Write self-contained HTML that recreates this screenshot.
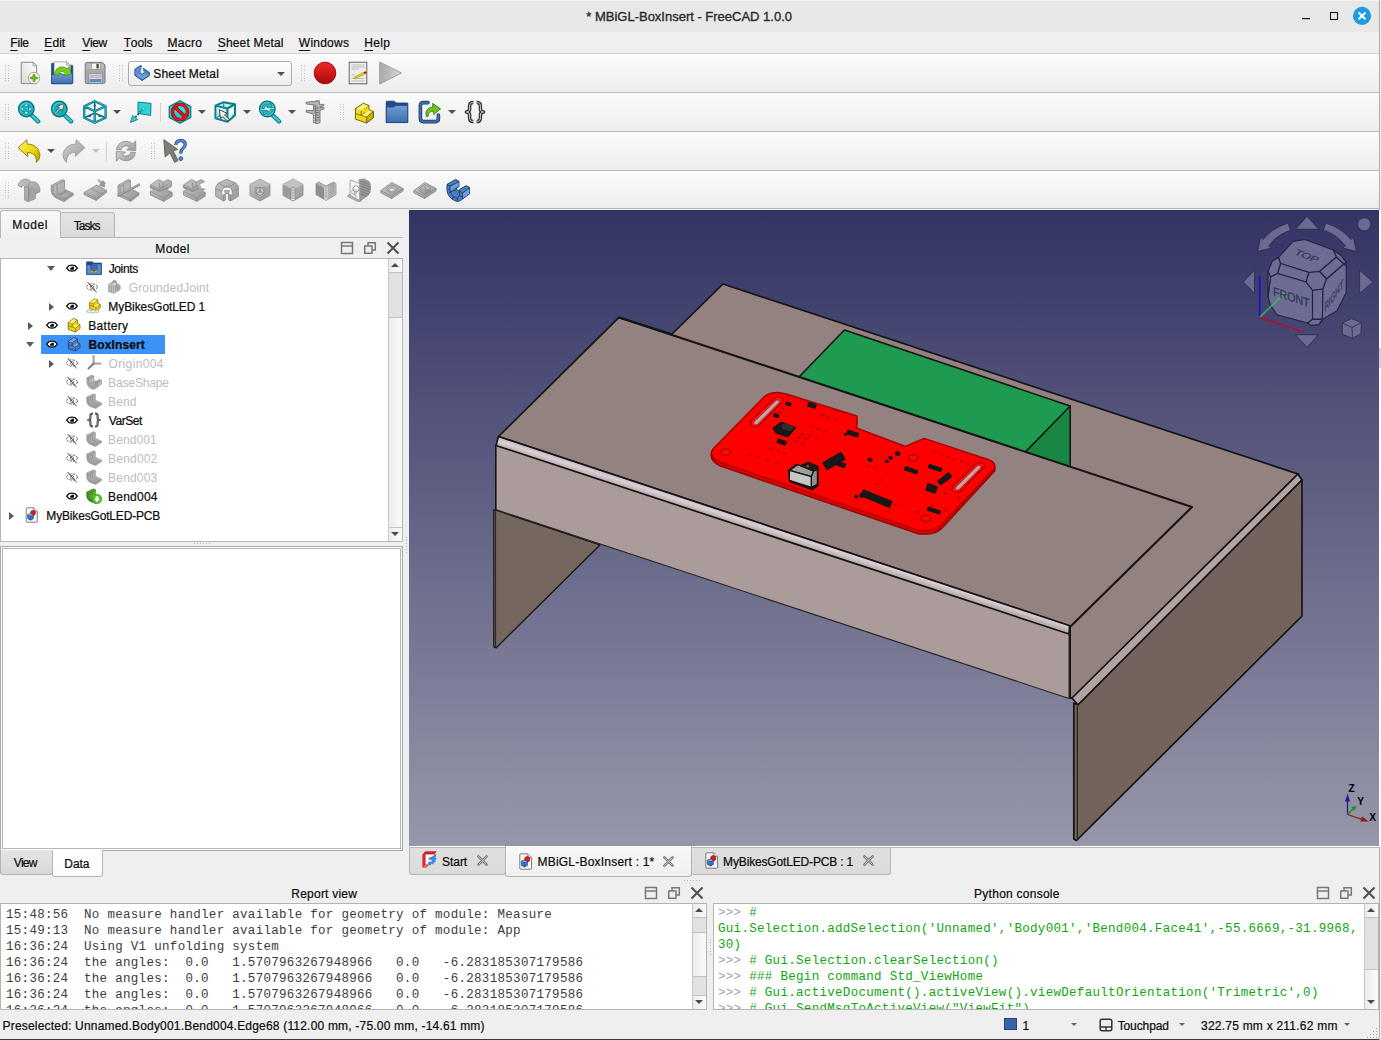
<!DOCTYPE html>
<html lang="en">
<head>
<meta charset="utf-8">
<title>* MBiGL-BoxInsert - FreeCAD 1.0.0</title>
<style>
*{box-sizing:border-box;margin:0;padding:0}
html,body{width:1381px;height:1040px;overflow:hidden;background:#efefef}
body{position:relative;font-family:"Liberation Sans","DejaVu Sans",sans-serif;font-size:12px;color:#1a1a1a;-webkit-font-smoothing:antialiased}
.abs{position:absolute}
.t{position:absolute;white-space:pre;line-height:16px;height:16px;z-index:3;color:#0a0a0a;-webkit-text-stroke:0.2px currentColor}
#titlebar{left:0;top:0;width:1381px;height:32px;background:#e8e8e8}
#title{left:0;width:1378px;top:8px;text-align:center;font-weight:bold;font-size:12.4px;color:#2b2b2b}
#menubar{left:0;top:32px;width:1381px;height:22px;background:#efefef;border-bottom:1px solid #d2d2d2}
#menubar .t{top:3px}
u{text-decoration:underline;text-underline-offset:2.6px;text-decoration-thickness:1px}
.tb{left:0;width:1381px;height:39px;background:linear-gradient(#fbfbfb,#ededed);border-bottom:1px solid #b9b9b9}
.grip{position:absolute;top:11px}
.sep{position:absolute;width:1px;height:19px;top:10px;background:#d2d2d2}
.ic{position:absolute;width:24px;height:24px;top:7px}
.dd{position:absolute;width:0;height:0;border-left:4px solid transparent;border-right:4px solid transparent;border-top:4.5px solid #505050;top:17px}
.dd.dis{border-top-color:#c4c4c4}
</style>
</head>
<body>
<style>
.tab{position:absolute;border:1px solid #b6b6b6;text-align:center;line-height:16px}
.tab.sel{background:linear-gradient(#f8f8f8,#efefef);z-index:2}
.tab.un{background:linear-gradient(#e4e4e4,#d9d9d9)}
.docktitle{position:absolute;height:20px;line-height:16px;text-align:center}
.frame{position:absolute;background:#fff;border:1px solid #b4b4b4}
.row{position:absolute;left:0;height:19px;width:386px}
.row .t{top:2px}
.row .dis{color:#b9b9b9}
.tarrow{position:absolute;top:6px;width:0;height:0}
.tarrow.r{border-top:4px solid transparent;border-bottom:4px solid transparent;border-left:5px solid #5a5a5a;top:5.5px}
.tarrow.d{border-left:4px solid transparent;border-right:4px solid transparent;border-top:5px solid #5a5a5a;top:7px}
.ti{position:absolute;top:1px;width:16px;height:16px}
.sb{position:absolute;width:14px;background:linear-gradient(90deg,#ececec,#fbfbfb);border-left:1px solid #c6c6c6}
.sb .h{position:absolute;left:0;width:13px;background:#e2e2e2;border-top:1px solid #c0c0c0;border-bottom:1px solid #c0c0c0}
.sb .u,.sb .d{position:absolute;left:2px;width:0;height:0;border-left:4px solid transparent;border-right:4px solid transparent}
.sb .u{border-bottom:4px solid #4a4a4a}
.sb .d{border-top:4px solid #4a4a4a}
.dbtn{position:absolute;width:14px;height:14px}
</style>
<svg width="0" height="0" style="position:absolute">
  <defs>
    <symbol id="eye" viewBox="0 0 16 16"><path d="M2.6 8.1 L5.2 5.5 Q8 4.7 10.8 5.5 L13.4 8.1 L10.8 10.7 Q8 11.5 5.2 10.7Z" fill="#fff" stroke="#050505" stroke-width="1.3" stroke-linejoin="round"/><path d="M6.2 9.7 V7.7 H7.4 V6.8 H9.9 V9.7Z" fill="#050505"/></symbol>
    <symbol id="eyeoff" viewBox="0 0 16 16"><ellipse cx="8" cy="8" rx="5.4" ry="3.1" fill="none" stroke="#666" stroke-width="1" stroke-dasharray="2.4 1"/><circle cx="8" cy="8.2" r="1.7" fill="none" stroke="#777" stroke-width="0.9"/><path d="M3.6 3 L12.6 13.4" stroke="#4a4a4a" stroke-width="1"/></symbol>
    <symbol id="dk1" viewBox="0 0 14 14"><rect x="1.5" y="1.5" width="11" height="11" fill="none" stroke="#777" stroke-width="1.5"/><path d="M1.5 5 H12.5" stroke="#777" stroke-width="1.5"/></symbol>
    <symbol id="dk2" viewBox="0 0 14 14"><path d="M5 5 V1.7 H12.3 V9 H9" fill="none" stroke="#777" stroke-width="1.5"/><rect x="1.7" y="5" width="7.3" height="7.3" fill="none" stroke="#777" stroke-width="1.5"/></symbol>
    <symbol id="dk3" viewBox="0 0 14 14"><path d="M1.5 1.5 L12.5 12.5 M12.5 1.5 L1.5 12.5" stroke="#4e4e4e" stroke-width="2"/></symbol>
  </defs>
</svg>
<style>
.mono{font-family:"Liberation Mono","DejaVu Sans Mono",monospace;font-size:12.5px;letter-spacing:0.3px;line-height:16px;white-space:pre;position:absolute;left:5px}
.mtab{position:absolute;border:1px solid #b4b4b4;border-top:none;border-radius:0 0 3px 3px}
.mtab .t{top:5px}
.mtab.sel{background:linear-gradient(#f8f8f8,#f0f0f0)}
.mtab.un{background:linear-gradient(#dfdfdf,#dbdbdb)}
.pg{color:#a0a0a0}
.gr{color:#10a610}
</style>
<svg width="0" height="0" style="position:absolute"><defs>
  <symbol id="xcl" viewBox="0 0 11 11"><path d="M1.4 1.4 L9.6 9.6 M9.6 1.4 L1.4 9.6" stroke="#737373" stroke-width="2.5" stroke-linecap="round"/><path d="M1.6 1.6 L9.4 9.4 M9.4 1.6 L1.6 9.4" stroke="#d4d6d0" stroke-width="0.9" stroke-linecap="round"/></symbol>
  <symbol id="i_doc" viewBox="0 0 16 16"><path d="M3.5 1.5 H10 L12.5 4 V14.5 H3.5Z" fill="#fafafa" stroke="#555" stroke-width="1"/><path d="M10 1.5 V4 H12.5" fill="#ddd" stroke="#555" stroke-width="0.8"/><path d="M5 8.5 L8 7.5 L10 8.5 V12 L7.5 13.5 L5 12Z" fill="#2f62b5" stroke="#1b3c78" stroke-width="0.6"/><circle cx="9.6" cy="7" r="2.1" fill="#e02020"/></symbol>
  <symbol id="fclogo" viewBox="0 0 15 17"><path d="M0.6 3.4 L3.4 0.6 H14.6 L11.8 3.4 V3.4 H14.6 L11.6 6.6 H7.4 V8 H10.6 L8 11 H7.4 L7.4 13.6 L4.4 16.4 H0.6Z" fill="#e8343a"/><path d="M0.6 3.4 L3.4 0.6 H14.6 L11.8 3.4Z" fill="#c8242a"/><path d="M0.6 3.4 H3.6 V13.6 L0.6 16.4Z" fill="#d42a30"/><path d="M3.6 3.4 H11.8 V6.4 H6.6 V8.6 H9.6 V10.8 H6.6 V13.6 H3.6Z" fill="#fff"/><path d="M0.6 16.4 L3.6 13.6 H6.6 L4.4 16.4Z" fill="#ff5a5e"/><path d="M8 6.6 L14.2 3.6 L13.4 6.6 L14.8 8 L13 9 L14 11 L11.8 11.2 L11.6 13.4 L9.6 12.8 L8.4 14.6 L6.6 13.6 L4.6 16.4 L6.6 10.8 H9.6 V8.6 H6.8Z" fill="#3a8be4"/></symbol>
  <symbol id="i_doc2" viewBox="0 0 14 17"><path d="M1.8 0.8 H8.8 L12.6 4.4 V15.2 Q12.6 16.2 11.6 16.2 H1.8 Q0.8 16.2 0.8 15.2 V1.8 Q0.8 0.8 1.8 0.8Z" fill="#f6f6f4" stroke="#6a6e70" stroke-width="0.9"/><path d="M8.8 0.8 V4.4 H12.6" fill="#e4e4e2" stroke="#6a6e70" stroke-width="0.7"/><circle cx="8.2" cy="6.2" r="2.7" fill="#e0161c" stroke="#a40a10" stroke-width="0.5"/><path d="M2.4 8.2 L5.4 7 L8.4 8.2 V12.4 L5.6 14 L2.4 12.4Z" fill="#3e7cc6" stroke="#1c3f78" stroke-width="0.7" stroke-linejoin="round"/><path d="M2.4 8.2 L5.6 9.6 L8.4 8.2 M5.6 9.6 V14" fill="none" stroke="#1c3f78" stroke-width="0.6"/><path d="M2.8 8.3 L5.5 7.3 L8 8.3 L5.6 9.3Z" fill="#7fb0ea"/></symbol>
</defs></svg>
<svg width="0" height="0" style="position:absolute"><defs><symbol id="gripdots" viewBox="0 0 6 20"><g fill="#c2c2c2"><rect x="0" y="0" width="1" height="1"/><rect x="3" y="0" width="1" height="1"/><rect x="0" y="3" width="1" height="1"/><rect x="3" y="3" width="1" height="1"/><rect x="0" y="5" width="1" height="1"/><rect x="3" y="5" width="1" height="1"/><rect x="0" y="8" width="1" height="1"/><rect x="3" y="8" width="1" height="1"/><rect x="0" y="10" width="1" height="1"/><rect x="3" y="10" width="1" height="1"/><rect x="0" y="13" width="1" height="1"/><rect x="3" y="13" width="1" height="1"/><rect x="0" y="15" width="1" height="1"/><rect x="3" y="15" width="1" height="1"/></g></symbol></defs></svg>
<div id="titlebar" class="abs">
  <div class="abs" style="left:0;top:0;width:1379px;height:1px;background:#f1f1f1"></div>
  <svg class="abs" style="left:1296px;top:0" width="83" height="32" viewBox="1296 0 83 32">
    <rect x="1302" y="18" width="8" height="1.2" fill="#1a1a1a"/>
    <rect x="1330.5" y="12.5" width="7" height="7" fill="none" stroke="#1a1a1a" stroke-width="1.1"/>
    <circle cx="1362" cy="15.9" r="9.1" fill="#1d9ce0"/>
    <path d="M1358.6 12.5 L1365.4 19.3 M1365.4 12.5 L1358.6 19.3" stroke="#fff" stroke-width="2" stroke-linecap="butt"/>
  </svg>
</div>
<div id="menubar" class="abs"></div>
<span class="t" style="left:586.29px;top:8.50px;letter-spacing:-0.006px;font-size:13px;color:#2b2b2b;-webkit-text-stroke:0.35px #2b2b2b">* MBiGL-BoxInsert - FreeCAD 1.0.0</span>
<span class="t" style="left:10.32px;top:34.74px;letter-spacing:-0.206px"><u style="letter-spacing:0;margin-right:-0.206px">F</u>ile</span>
<span class="t" style="left:44.32px;top:34.74px;letter-spacing:0.065px"><u style="letter-spacing:0;margin-right:0.065px">E</u>dit</span>
<span class="t" style="left:82.25px;top:34.74px;letter-spacing:-0.395px"><u style="letter-spacing:0;margin-right:-0.395px">V</u>iew</span>
<span class="t" style="left:123.63px;top:34.74px;letter-spacing:-0.11px"><u style="letter-spacing:0;margin-right:-0.11px">T</u>ools</span>
<span class="t" style="left:167.52px;top:34.74px;letter-spacing:0.287px"><u style="letter-spacing:0;margin-right:0.287px">M</u>acro</span>
<span class="t" style="left:217.76px;top:34.74px;letter-spacing:0.171px"><u style="letter-spacing:0;margin-right:0.171px">S</u>heet Metal</span>
<span class="t" style="left:298.85px;top:34.74px;letter-spacing:0.234px"><u style="letter-spacing:0;margin-right:0.234px">W</u>indows</span>
<span class="t" style="left:364.32px;top:34.74px;letter-spacing:0.336px"><u style="letter-spacing:0;margin-right:0.336px">H</u>elp</span>
<div class="abs tb" style="top:54px;height:39px" id="tb1"><svg class="grip" style="left:5px" width="6" height="20" viewBox="0 0 6 20"><use href="#gripdots"/></svg><svg class="ic" style="left:18px"><use href="#ic_new"/></svg><svg class="ic" style="left:51px"><use href="#ic_open"/></svg><svg class="ic" style="left:84px"><use href="#ic_save"/></svg><svg class="grip" style="left:119px" width="6" height="20" viewBox="0 0 6 20"><use href="#gripdots"/></svg><div class="abs" id="combo" style="left:128px;top:7px;width:164px;height:25px;border:1px solid #adadad;border-radius:3px;background:linear-gradient(#ffffff,#ececec)"><svg class="abs" style="left:5px;top:3px" width="16" height="16"><use href="#ic_sm"/></svg><i class="dd" style="left:148px;top:10px"></i></div><svg class="grip" style="left:301px" width="6" height="20" viewBox="0 0 6 20"><use href="#gripdots"/></svg><svg class="ic" style="left:313px"><use href="#ic_rec"/></svg><svg class="ic" style="left:346px"><use href="#ic_macro"/></svg><svg class="ic" style="left:379px"><use href="#ic_play"/></svg></div>
<div class="abs tb" style="top:93px;height:39px" id="tb2"><svg class="grip" style="left:5px" width="6" height="20" viewBox="0 0 6 20"><use href="#gripdots"/></svg><svg class="ic" style="left:17px"><use href="#ic_zfit"/></svg><svg class="ic" style="left:50px"><use href="#ic_zsel"/></svg><svg class="ic" style="left:83px"><use href="#ic_views"/></svg><i class="dd" style="left:113px"></i><svg class="ic" style="left:129px"><use href="#ic_plarrow"/></svg><i class="sep" style="left:160px"></i><svg class="ic" style="left:168px"><use href="#ic_draw"/></svg><i class="dd" style="left:198px"></i><svg class="ic" style="left:213px"><use href="#ic_bbox"/></svg><i class="dd" style="left:243px"></i><svg class="ic" style="left:258px"><use href="#ic_zsync"/></svg><i class="dd" style="left:288px"></i><svg class="ic" style="left:303px"><use href="#ic_calip"/></svg><svg class="grip" style="left:340px" width="6" height="20" viewBox="0 0 6 20"><use href="#gripdots"/></svg><svg class="ic" style="left:352px"><use href="#ic_part"/></svg><svg class="ic" style="left:385px"><use href="#ic_group"/></svg><svg class="ic" style="left:418px"><use href="#ic_linkact"/></svg><i class="dd" style="left:448px"></i><svg class="ic" style="left:463px"><use href="#ic_varset"/></svg></div>
<div class="abs tb" style="top:132px;height:39px" id="tb3"><svg class="grip" style="left:5px" width="6" height="20" viewBox="0 0 6 20"><use href="#gripdots"/></svg><svg class="ic" style="left:17px"><use href="#ic_undo"/></svg><i class="dd" style="left:47px"></i><svg class="ic" style="left:62px"><use href="#ic_redo"/></svg><i class="dd dis" style="left:92px"></i><i class="sep" style="left:106px"></i><svg class="ic" style="left:114px"><use href="#ic_refresh"/></svg><svg class="grip" style="left:151px" width="6" height="20" viewBox="0 0 6 20"><use href="#gripdots"/></svg><svg class="ic" style="left:163px"><use href="#ic_whats"/></svg></div>
<div class="abs tb" style="top:171px;height:38px" id="tb4"><svg class="grip" style="left:5px" width="6" height="20" viewBox="0 0 6 20"><use href="#gripdots"/></svg><svg class="ic" style="left:17px"><use href="#sm_wall"/></svg><svg class="ic" style="left:50px"><use href="#sm_extend"/></svg><svg class="ic" style="left:83px"><use href="#sm_flange"/></svg><svg class="ic" style="left:116px"><use href="#sm_fold"/></svg><svg class="ic" style="left:149px"><use href="#sm_unfold"/></svg><svg class="ic" style="left:182px"><use href="#sm_unfold2"/></svg><svg class="ic" style="left:215px"><use href="#sm_relief"/></svg><svg class="ic" style="left:248px"><use href="#sm_junction"/></svg><svg class="ic" style="left:281px"><use href="#sm_bend"/></svg><svg class="ic" style="left:314px"><use href="#sm_sketch"/></svg><svg class="ic" style="left:347px"><use href="#sm_form"/></svg><svg class="ic" style="left:380px"><use href="#sm_base"/></svg><svg class="ic" style="left:413px"><use href="#sm_flat"/></svg><svg class="ic" style="left:446px"><use href="#sm_conv"/></svg></div>
<span class="t" style="left:153.26px;top:65.74px;letter-spacing:0.151px">Sheet Metal</span>
<div id="left" class="abs" style="left:0;top:209px;width:409px;height:670px;background:#efefef">
  <div class="abs" style="left:0;top:28px;width:403px;height:1px;background:#b6b6b6"></div>
  <div class="tab sel" style="left:0;top:1px;width:61px;height:28px;border-bottom:none;border-radius:3px 3px 0 0"></div>
  <div class="tab un" style="left:60px;top:3px;width:55px;height:26px;border-radius:3px 3px 0 0"></div>
  <svg class="dbtn" style="left:340px;top:32px"><use href="#dk1"/></svg>
  <svg class="dbtn" style="left:363px;top:32px"><use href="#dk2"/></svg>
  <svg class="dbtn" style="left:386px;top:32px"><use href="#dk3"/></svg>
  <div class="frame" id="tree" style="left:0;top:49px;width:403px;height:284px">
    <div class="sb" style="left:387px;top:0;height:282px"><i class="u" style="top:4px"></i><i class="h" style="top:13px;height:46px"></i><i class="d" style="top:273px"></i><i class="abs" style="left:0;top:268px;width:13px;height:1px;background:#c6c6c6"></i></div>
  </div>
  <div class="abs" style="left:194px;top:334px;width:17px;height:1px;background-image:linear-gradient(90deg,#b4b4b4 1px,transparent 1px);background-size:3px 1px"></div>
  <div class="abs" style="left:0;top:337px;width:403px;height:305px;border:1px solid #a9a9a9;background:#fff"></div>
  <div class="frame" style="left:2px;top:339px;width:399px;height:301px;border-color:#b6b6b6"></div>
  <div class="tab un" style="left:0;top:641px;width:53px;height:25px;border-top:none;border-radius:0 0 3px 3px"></div>
  <div class="tab sel" style="left:52px;top:641px;width:51px;height:27px;border-top:none;border-radius:0 0 3px 3px;background:linear-gradient(#fff,#fcfcfc)"></div>
  <div class="abs" style="left:406px;top:328px;width:1px;height:17px;background-image:linear-gradient(#a8a8a8 1px,transparent 1px);background-size:1px 3px"></div>
</div>
<span class="t" style="left:12.32px;top:216.84px;letter-spacing:0.576px">Model</span>
<span class="t" style="left:73.63px;top:217.84px;letter-spacing:-0.925px">Tasks</span>
<span class="t" style="left:155.32px;top:240.84px;letter-spacing:0.376px">Model</span>
<span class="t" style="left:13.85px;top:854.84px;letter-spacing:-0.729px">View</span>
<span class="t" style="left:64.32px;top:855.84px;letter-spacing:-0.054px">Data</span>
<div class="abs" id="rows" style="left:0;top:0;width:388px;height:540px;overflow:hidden">
<i class="tarrow d" style="left:47px;top:266px"></i>
<svg class="ti" style="left:64px;top:260px"><use href="#eye"/></svg>
<svg class="ti" style="left:86px;top:259.5px"><use href="#i_folder"/></svg>
<span class="t" style="left:108.71px;top:260.84px;letter-spacing:-0.385px">Joints</span>
<svg class="ti" style="left:84px;top:279px"><use href="#eyeoff"/></svg>
<svg class="ti" style="left:106px;top:278.5px"><use href="#i_gjoint"/></svg>
<span class="t" style="left:128.70px;top:279.84px;letter-spacing:0.148px;color:#bcbcbc;-webkit-text-stroke:0">GroundedJoint</span>
<i class="tarrow r" style="left:49px;top:302.5px"></i>
<svg class="ti" style="left:64px;top:298px"><use href="#eye"/></svg>
<svg class="ti" style="left:86px;top:297.5px"><use href="#i_link"/></svg>
<span class="t" style="left:108.32px;top:298.84px;letter-spacing:-0.076px">MyBikesGotLED 1</span>
<i class="tarrow r" style="left:28px;top:321.5px"></i>
<svg class="ti" style="left:44px;top:317px"><use href="#eye"/></svg>
<svg class="ti" style="left:66px;top:316.5px"><use href="#i_part"/></svg>
<span class="t" style="left:88.32px;top:317.84px;letter-spacing:0.299px">Battery</span>
<div class="abs" style="left:41px;top:335px;width:124px;height:19px;background:#3d92f8"></div>
<i class="tarrow d" style="left:26px;top:342px"></i>
<svg class="ti" style="left:44px;top:336px"><use href="#eye"/></svg>
<svg class="ti" style="left:66px;top:335.5px"><use href="#i_body"/></svg>
<span class="t" style="left:88.50px;top:336.84px;letter-spacing:0.125px;font-weight:bold">BoxInsert</span>
<i class="tarrow r" style="left:49px;top:359.5px"></i>
<svg class="ti" style="left:64px;top:355px"><use href="#eyeoff"/></svg>
<svg class="ti" style="left:86px;top:354.5px"><use href="#i_origin"/></svg>
<span class="t" style="left:108.53px;top:355.84px;letter-spacing:0.361px;color:#bcbcbc;-webkit-text-stroke:0">Origin004</span>
<svg class="ti" style="left:64px;top:374px"><use href="#eyeoff"/></svg>
<svg class="ti" style="left:86px;top:373.5px"><use href="#i_base"/></svg>
<span class="t" style="left:108.12px;top:374.84px;letter-spacing:-0.142px;color:#bcbcbc;-webkit-text-stroke:0">BaseShape</span>
<svg class="ti" style="left:64px;top:393px"><use href="#eyeoff"/></svg>
<svg class="ti" style="left:86px;top:392.5px"><use href="#i_bend"/></svg>
<span class="t" style="left:108.12px;top:393.84px;letter-spacing:0.111px;color:#bcbcbc;-webkit-text-stroke:0">Bend</span>
<svg class="ti" style="left:64px;top:412px"><use href="#eye"/></svg>
<svg class="ti" style="left:86px;top:411.5px"><use href="#i_varset"/></svg>
<span class="t" style="left:108.85px;top:412.84px;letter-spacing:-0.469px">VarSet</span>
<svg class="ti" style="left:64px;top:431px"><use href="#eyeoff"/></svg>
<svg class="ti" style="left:86px;top:430.5px"><use href="#i_bend"/></svg>
<span class="t" style="left:108.12px;top:431.84px;letter-spacing:0.087px;color:#bcbcbc;-webkit-text-stroke:0">Bend001</span>
<svg class="ti" style="left:64px;top:450px"><use href="#eyeoff"/></svg>
<svg class="ti" style="left:86px;top:449.5px"><use href="#i_bend"/></svg>
<span class="t" style="left:108.12px;top:450.84px;letter-spacing:0.19px;color:#bcbcbc;-webkit-text-stroke:0">Bend002</span>
<svg class="ti" style="left:64px;top:469px"><use href="#eyeoff"/></svg>
<svg class="ti" style="left:86px;top:468.5px"><use href="#i_bend"/></svg>
<span class="t" style="left:108.12px;top:469.84px;letter-spacing:0.177px;color:#bcbcbc;-webkit-text-stroke:0">Bend003</span>
<svg class="ti" style="left:64px;top:488px"><use href="#eye"/></svg>
<svg class="ti" style="left:86px;top:487.5px"><use href="#i_bend4"/></svg>
<span class="t" style="left:108.12px;top:488.84px;letter-spacing:0.215px">Bend004</span>
<i class="tarrow r" style="left:9px;top:511.5px"></i>
<svg class="ti" style="left:24px;top:506.5px"><use href="#i_doc2"/></svg>
<span class="t" style="left:46.32px;top:507.84px;letter-spacing:-0.167px">MyBikesGotLED-PCB</span>
</div>
<svg width="0" height="0" style="position:absolute">
<defs>
  <linearGradient id="gpage" x1="1" y1="0" x2="0" y2="1"><stop offset="0" stop-color="#ffffff"/><stop offset="1" stop-color="#d8d9d4"/></linearGradient>
  <linearGradient id="gred" x1="0" y1="0" x2="0" y2="1"><stop offset="0" stop-color="#f02a2a"/><stop offset="1" stop-color="#a90a0a"/></linearGradient>
  <linearGradient id="gplay" x1="0" y1="0" x2="1" y2="0"><stop offset="0" stop-color="#a9a9a9"/><stop offset="1" stop-color="#d6d6d6"/></linearGradient>
  <linearGradient id="gblue" x1="0" y1="0" x2="0" y2="1"><stop offset="0" stop-color="#6f9bd1"/><stop offset="1" stop-color="#3f6fb0"/></linearGradient>
  <linearGradient id="gteal" x1="0" y1="0" x2="1" y2="1"><stop offset="0" stop-color="#34e0e2"/><stop offset="1" stop-color="#16a6b4"/></linearGradient>
  <linearGradient id="gyel" x1="0" y1="0" x2="1" y2="1"><stop offset="0" stop-color="#fce94f"/><stop offset="1" stop-color="#d9b800"/></linearGradient>
  <linearGradient id="ggray" x1="0" y1="0" x2="1" y2="1"><stop offset="0" stop-color="#c8c8c8"/><stop offset="1" stop-color="#8a8a8a"/></linearGradient>
  <linearGradient id="gfloppy" x1="0" y1="0" x2="0" y2="1"><stop offset="0" stop-color="#bdbdbd"/><stop offset="1" stop-color="#8f8f8f"/></linearGradient>

  <symbol id="ic_new" viewBox="0 0 24 24">
    <path d="M3.8 1.3 Q3.2 1.3 3.2 1.9 V22 Q3.2 22.6 3.8 22.6 H18 Q18.6 22.6 18.6 22 V4.8 L15 1.3Z" fill="url(#gpage)" stroke="#85898c" stroke-width="1"/>
    <path d="M15 1.3 V4.8 H18.6Z" fill="#fff" stroke="#85898c" stroke-width="0.8" stroke-linejoin="round"/>
    <circle cx="16" cy="17" r="5.7" fill="#fdfdfd" stroke="#8a8e8c" stroke-width="0.8"/>
    <path d="M16 13.2 V20.8 M12.2 17 H19.8" stroke="#3f8506" stroke-width="2.6"/>
    <path d="M16 13.7 V20.3 M12.7 17 H19.3" stroke="#73d216" stroke-width="1.2"/>
  </symbol>
  <symbol id="ic_open" viewBox="0 0 24 24">
    <path d="M0.4 3 Q0.4 2.2 1.2 2.2 H3 V13 H19.4 V4.2 H21 Q21.8 4.2 21.8 5 V22 Q21.8 22.8 21 22.8 H1.2 Q0.4 22.8 0.4 22Z" fill="#204a87" stroke="#1a3d70" stroke-width="0.6"/>
    <path d="M3.2 0.9 H15.6 L19.4 4.4 V14 H3.2Z" fill="#fcfcfc" stroke="#9a9e9c" stroke-width="0.8"/>
    <path d="M15.6 0.9 V4.4 H19.4Z" fill="#e2e2e0" stroke="#9a9e9c" stroke-width="0.7"/>
    <path d="M0.6 13.4 H5 C6.4 13.4 7.4 12.4 9 12.4 C10.8 12.4 11.6 13.6 13.4 13.6 C15 13.6 16 12.6 17.6 12.6 H21.6 V22 Q21.6 22.6 21 22.6 H1.2 Q0.6 22.6 0.6 22Z" fill="url(#gblue)" stroke="#204a87" stroke-width="0.7"/>
    <path d="M3.8 14 C3.6 9 6.8 6 11 6 C13 6 14.6 6.6 16 7.8 L18.2 5.6 L20.2 13.2 L12.4 14.8 L14.4 12 C13 10.6 11 10.2 9.6 10.8 C8.4 11.4 7.8 12.6 8 14.2Z" fill="#73d216" stroke="#4a8c0a" stroke-width="0.8" stroke-linejoin="round"/>
  </symbol>
  <symbol id="ic_save" viewBox="0 0 24 24">
    <path d="M2.8 1.4 H18.4 L21 4 V21 Q21 22.6 19.4 22.6 H2.8 Q1.2 22.6 1.2 21 V3 Q1.2 1.4 2.8 1.4Z" fill="#a9a9a9" stroke="#7c7c7c" stroke-width="1"/>
    <path d="M2.4 2.6 H18 L19.8 4.4 V8 H2.4Z" fill="#b9b9b9"/>
    <rect x="7.4" y="2.2" width="8.8" height="6" fill="#f6f6f6" stroke="#8a8a8a" stroke-width="0.6"/>
    <rect x="12.4" y="3" width="2.4" height="4.4" fill="#4a4a4a"/>
    <rect x="4.8" y="12.4" width="13.4" height="9.6" fill="#d9d9d9" stroke="#858585" stroke-width="0.7"/>
    <path d="M5.6 14.4 H17.4 M5.6 16.2 H17.4" stroke="#a4a4a4" stroke-width="0.8"/>
    <rect x="5.6" y="18" width="11.8" height="3" fill="#5b8bd0"/>
  </symbol>
  <symbol id="ic_rec" viewBox="0 0 24 24"><circle cx="12" cy="12" r="10.8" fill="url(#gred)" stroke="#a40000" stroke-width="0.9"/></symbol>
  <symbol id="ic_macro" viewBox="0 0 24 24">
    <rect x="3.2" y="1.2" width="17.6" height="21.6" fill="#eeeeec" stroke="#555" stroke-width="0.9"/>
    <path d="M5.5 4 H18.5 M5.5 6 H18.5 M5.5 8 H13 M5.5 14 H9 M5.5 17.5 H18.5 M5.5 20 H18.5" stroke="#b0b0b0" stroke-width="0.8"/>
    <path d="M8.5 16.2 L17.5 11.2 L19 13 L10 17.2 L7.5 17.4Z" fill="#edd400" stroke="#a88a00" stroke-width="0.6"/>
    <path d="M17.5 11.2 L19.6 10.2 L20.6 11.8 L19 13Z" fill="#cc0000"/>
  </symbol>
  <symbol id="ic_play" viewBox="0 0 24 24"><path d="M0.7 1 L22.5 12 L0.7 23Z" fill="url(#gplay)" stroke="#9c9c9c" stroke-width="0.9" stroke-linejoin="round"/></symbol>
  <symbol id="ic_sm" viewBox="0 0 16 16">
    <path d="M6.7 0.4 L7.6 1 L7.4 5.6 L9.2 3.2 L15.4 7.6 V10.4 L8.1 15.5 L0.9 10.4 V4.3Z" fill="#4f82c4" stroke="#1d3c6c" stroke-width="0.9" stroke-linejoin="round"/>
    <path d="M1.6 10 L8.1 14.6 L14.8 10 L11 8.2 L8.2 10.4 L4.6 8.4Z" fill="#6b9cd8"/>
    <path d="M1.4 4.8 L6.4 1.4 L6.6 6.6 L4.4 8.2 L1.4 9.6Z" fill="#5a8dce"/>
    <path d="M7.5 1.4 L8.9 3.6 L9.4 7 Q8.2 8.6 6.9 7.2Z" fill="#fbfbfb"/>
    <circle cx="8.1" cy="7" r="1.35" fill="#fff"/>
  </symbol>

  <!-- toolbar 2 -->
  <symbol id="ic_zfit" viewBox="0 0 24 24">
    <path d="M15 15.5 L21.2 21.4" stroke="#0a6e79" stroke-width="4.2" stroke-linecap="round"/>
    <path d="M15 15.5 L21.2 21.4" stroke="#2fd3df" stroke-width="2.4" stroke-linecap="round"/>
    <circle cx="9.3" cy="9" r="7.7" fill="url(#gteal)" stroke="#0a6e79" stroke-width="1.4"/>
    <circle cx="9.3" cy="9" r="5.2" fill="#12a3b0" />
    <path d="M9.3 3.6 L11.4 6.2 H7.2Z M9.3 14.4 L11.4 11.8 H7.2Z M3.9 9 L6.5 6.9 V11.1Z M14.7 9 L12.1 6.9 V11.1Z" fill="#f4f4f4" stroke="#0a6e79" stroke-width="0.4"/>
    <rect x="7.4" y="7.1" width="3.8" height="3.8" fill="#1fc1ce"/>
  </symbol>
  <symbol id="ic_zsel" viewBox="0 0 24 24">
    <path d="M15 15.5 L21.2 21.4" stroke="#0a6e79" stroke-width="4.2" stroke-linecap="round"/>
    <path d="M15 15.5 L21.2 21.4" stroke="#2fd3df" stroke-width="2.4" stroke-linecap="round"/>
    <circle cx="9.3" cy="9" r="7.7" fill="url(#gteal)" stroke="#0a6e79" stroke-width="1.4"/>
    <circle cx="9.3" cy="9" r="5.4" fill="#14a9b6"/>
    <path d="M4.4 13.2 L9.6 8 L7.6 6 L14.2 3.8 L12.4 10.6 L10.6 8.8 L5.4 14.2Z" fill="#f6f6f6" stroke="#3a3a3a" stroke-width="0.7" stroke-linejoin="round"/>
  </symbol>
  <symbol id="ic_views" viewBox="0 0 24 24">
    <path d="M11.7 1.2 L22.6 6.2 V17.8 L11.7 22.8 L1.2 17.8 V6.2Z M1.2 6.2 L11.7 11.2 L22.6 6.2 M11.7 11.2 V22.8" fill="none" stroke="#0a6e79" stroke-width="2.3" stroke-linejoin="round"/>
    <path d="M11.7 1.2 V11.2 M1.2 17.8 L11.7 13 L22.6 17.8" fill="none" stroke="#0a6e79" stroke-width="1.5"/>
    <path d="M11.7 1.2 L22.6 6.2 V17.8 L11.7 22.8 L1.2 17.8 V6.2Z M1.2 6.2 L11.7 11.2 L22.6 6.2 M11.7 11.2 V22.8" fill="none" stroke="#25cbd6" stroke-width="0.8" stroke-linejoin="round"/>
    <ellipse cx="6.6" cy="16" rx="1.7" ry="1" fill="#0a6e79"/><ellipse cx="16.8" cy="16" rx="1.7" ry="1" fill="#0a6e79"/><ellipse cx="11.7" cy="5.6" rx="1.1" ry="1.4" fill="#0a6e79"/>
  </symbol>
  <symbol id="ic_plarrow" viewBox="0 0 24 24">
    <path d="M9 2 L22 3.4 L21.6 15.4 L9 13.4Z" fill="#2bd6dc" stroke="#0a6e79" stroke-width="0.9" stroke-linejoin="round"/>
    <path d="M14.4 8.6 L5.6 18" stroke="#0a6e79" stroke-width="1.8" stroke-dasharray="2 1.3"/>
    <circle cx="14.6" cy="8.6" r="1.4" fill="#e8fbfc" stroke="#0a6e79" stroke-width="0.6"/>
    <path d="M1.4 22.4 L3.6 15.4 L8.6 19.6Z" fill="#2bd6dc" stroke="#0a6e79" stroke-width="0.8" stroke-linejoin="round"/>
  </symbol>
  <symbol id="ic_draw" viewBox="0 0 24 24">
    <path d="M12 0.8 L22.8 6.4 V17.6 L12 23.2 L1.2 17.6 V6.4Z" fill="#25cbd6" stroke="#0a6e79" stroke-width="1.1" stroke-linejoin="round"/>
    <path d="M12 2.4 L21.4 7.2 V12 L2.6 12 V7.2Z" fill="#3fe0e6" opacity="0.7"/>
    <circle cx="12" cy="12" r="7.6" fill="none" stroke="#8a0000" stroke-width="3.4"/>
    <circle cx="12" cy="12" r="7.6" fill="none" stroke="#e01b1b" stroke-width="2.2"/>
    <path d="M6.6 6.8 L17.4 17.2" stroke="#8a0000" stroke-width="3.4"/>
    <path d="M6.6 6.8 L17.4 17.2" stroke="#e01b1b" stroke-width="2.2"/>
  </symbol>
  <symbol id="ic_bbox" viewBox="0 0 24 24">
    <path d="M2.4 5.6 L10.6 2.2 L22 4.2 V15.6 L14.4 21.8 L2.4 18.4Z" fill="#8fdfe6" fill-opacity="0.55" stroke="#0a7d88" stroke-width="1.9" stroke-linejoin="round"/>
    <path d="M2.4 5.6 L14.4 8.4 L22 4.2 M14.4 8.4 V21.8" fill="none" stroke="#0a7d88" stroke-width="1.9"/>
    <path d="M10.6 2.2 V13 L2.4 18.4 M10.6 13 L22 15.6" fill="none" stroke="#1aa0ac" stroke-width="1.2"/>
    <path d="M4.4 7.6 L12.6 9.6 V13.6 L4.4 11.8Z" fill="#eafcfd" opacity="0.8"/>
    <path d="M16 10 L20.4 7.4 V14 L16 17.6Z" fill="#fff" opacity="0.85"/>
    <path d="M6.2 9.6 L7.6 18.6 L9.8 16.6 L14.6 21 L16.4 19.2 L11.6 15 L13.8 13.2Z" fill="#f4f4f4" stroke="#2b2b2b" stroke-width="0.9" stroke-linejoin="round"/>
  </symbol>
  <symbol id="ic_zsync" viewBox="0 0 24 24">
    <path d="M15 15.5 L21.2 21.4" stroke="#0a6e79" stroke-width="4.2" stroke-linecap="round"/>
    <path d="M15 15.5 L21.2 21.4" stroke="#2fd3df" stroke-width="2.4" stroke-linecap="round"/>
    <circle cx="9.3" cy="9" r="7.7" fill="#dff5f7" stroke="#0a6e79" stroke-width="1.5"/>
    <circle cx="9.3" cy="9" r="6.4" fill="none" stroke="#22c4d0" stroke-width="1.1"/>
    <path d="M3.8 8.6 C4 5 7.6 2.8 11.2 4.2 L12.4 2.8 L14.4 7.8 L9 7.6 L10 6.4 C8 5.8 6.4 6.8 6.2 8.8Z" fill="#1fc1ce" stroke="#0a6e79" stroke-width="0.8" stroke-linejoin="round"/>
    <path d="M14.8 9.4 C14.6 13 11 15.2 7.4 13.8 L6.2 15.2 L4.2 10.2 L9.6 10.4 L8.6 11.6 C10.6 12.2 12.2 11.2 12.4 9.2Z" fill="#1fc1ce" stroke="#0a6e79" stroke-width="0.8" stroke-linejoin="round"/>
  </symbol>
  <symbol id="ic_calip" viewBox="0 0 24 24">
    <path d="M3 2.4 L8 1.6 H13 V0.8 H16.4 V4.4 H20.8 L21 5.8 L17 6.8 V7.6 H21 L21 9 L17 10.2 V22.6 L14 23.6 L10.4 22.6 V14 L3.4 12.2 L3 10.4 L10.4 10.6 V4.8 L3.2 4Z" fill="#b4b6b3" stroke="#666" stroke-width="0.8" stroke-linejoin="round"/>
    <path d="M12.4 5 V22.6" stroke="#777" stroke-width="1.4"/>
    <path d="M13.4 8 H16 M13.4 10.4 H15.4 M13.4 12.8 H16 M13.4 15.2 H15.4 M13.4 17.6 H16 M13.4 20 H15.4" stroke="#555" stroke-width="0.8"/>
    <path d="M10.6 14.4 H12 M10.6 16.8 H12 M10.6 19.2 H12 M10.6 21.4 H12" stroke="#eee" stroke-width="0.8"/>
  </symbol>
  <symbol id="ic_part" viewBox="0 0 24 24">
    <path d="M3.4 8.6 L11.4 3.2 L17 5.6 V9.6 L21.4 11.6 V17.6 L14.6 23 L3.4 19.2Z" fill="#f0d816" stroke="#6a5b00" stroke-width="0.9" stroke-linejoin="round"/>
    <path d="M3.4 8.6 L9.2 10.6 L17 5.6 M9.2 10.6 V15.4 L3.4 13.6 M9.2 15.4 L14.6 17.2 L21.4 11.6 M14.6 17.2 V23 M9.2 15.4 L13.6 12" fill="none" stroke="#6a5b00" stroke-width="0.8" stroke-linejoin="round"/>
    <path d="M4 9.4 L9 11 L16 6.2 L11.4 4Z" fill="#fdf07a"/>
    <path d="M9.8 15 L14.4 16.6 L20.2 11.8 L16.8 10.4Z" fill="#fdf07a"/>
    <path d="M14.6 17.2 L21.4 11.6 V17.6 L14.6 23Z" fill="#cdb400" stroke="#6a5b00" stroke-width="0.8" stroke-linejoin="round"/>
  </symbol>
  <symbol id="ic_group" viewBox="0 0 24 24">
    <path d="M1.2 2 Q1.2 1.2 2 1.2 H9.4 L11 3 H22.8 V22.6 H1.2Z" fill="#204a87" stroke="#1a3a6a" stroke-width="0.8" stroke-linejoin="round"/>
    <path d="M1.4 7 H8.6 L10.6 5.4 H22.6 V22.4 H1.4Z" fill="url(#gblue)" stroke="#204a87" stroke-width="0.8" stroke-linejoin="round"/>
  </symbol>
  <symbol id="ic_linkact" viewBox="0 0 24 24">
    <path d="M10 2.6 H5.4 Q2.4 2.6 2.4 5.6 V18.6 Q2.4 21.6 5.4 21.6 H17.4 Q20.4 21.6 20.4 18.6 V15" fill="none" stroke="#16335f" stroke-width="3.6" stroke-linecap="round"/>
    <path d="M10 2.6 H5.4 Q2.4 2.6 2.4 5.6 V18.6 Q2.4 21.6 5.4 21.6 H17.4 Q20.4 21.6 20.4 18.6 V15" fill="none" stroke="#3b6db3" stroke-width="2.2" stroke-linecap="round"/>
    <path d="M8.6 16.6 C6.6 11 9.6 7.4 15 7.2 L14.6 3.4 L22.6 8.8 L15.8 14.6 L15.4 11.2 C12.4 11 10.4 12.6 10 16.4Z" fill="#6bc51e" stroke="#3d7a05" stroke-width="0.9" stroke-linejoin="round"/>
  </symbol>
  <symbol id="ic_varset" viewBox="0 0 24 24">
    <path d="M10.4 2.6 C7.2 2.4 6.6 4 6.6 6.2 V9 C6.6 10.8 5.6 11.8 3.4 12 C5.6 12.2 6.6 13.2 6.6 15 V17.8 C6.6 20 7.2 21.6 10.4 21.4" fill="none" stroke="#2e3436" stroke-width="3.5" stroke-linejoin="round"/>
    <path d="M10.4 2.6 C7.2 2.4 6.6 4 6.6 6.2 V9 C6.6 10.8 5.6 11.8 3.4 12 C5.6 12.2 6.6 13.2 6.6 15 V17.8 C6.6 20 7.2 21.6 10.4 21.4" fill="none" stroke="#e4e6e2" stroke-width="0.9"/>
    <path d="M13.6 2.6 C16.8 2.4 17.4 4 17.4 6.2 V9 C17.4 10.8 18.4 11.8 20.6 12 C18.4 12.2 17.4 13.2 17.4 15 V17.8 C17.4 20 16.8 21.6 13.6 21.4" fill="none" stroke="#2e3436" stroke-width="3.5" stroke-linejoin="round"/>
    <path d="M13.6 2.6 C16.8 2.4 17.4 4 17.4 6.2 V9 C17.4 10.8 18.4 11.8 20.6 12 C18.4 12.2 17.4 13.2 17.4 15 V17.8 C17.4 20 16.8 21.6 13.6 21.4" fill="none" stroke="#e4e6e2" stroke-width="0.9"/>
  </symbol>
</defs>
</svg>
<svg width="0" height="0" style="position:absolute">
<defs>
  <linearGradient id="gundo" x1="0" y1="0" x2="1" y2="1"><stop offset="0" stop-color="#fff27a"/><stop offset="0.6" stop-color="#edd400"/><stop offset="1" stop-color="#b89b00"/></linearGradient>
  <linearGradient id="gredo" x1="0" y1="0" x2="1" y2="1"><stop offset="0" stop-color="#d2d2d2"/><stop offset="1" stop-color="#9a9a9a"/></linearGradient>
  <linearGradient id="gsm" x1="0" y1="0" x2="1" y2="1"><stop offset="0" stop-color="#c6c6c6"/><stop offset="1" stop-color="#979797"/></linearGradient>
  <symbol id="ic_undo" viewBox="0 0 24 24">
    <path d="M1.2 8.8 L9.8 0.8 L10.2 5.2 C17.4 5 22 9.4 22.8 15.4 C23 18.6 22 21.2 19.4 23.2 C19.8 20 18.8 17.2 16.6 15.4 C14.8 14 12.6 13.4 10.4 13.6 L10.8 17.6Z" fill="url(#gundo)" stroke="#8a7400" stroke-width="0.9" stroke-linejoin="round"/>
  </symbol>
  <symbol id="ic_redo" viewBox="0 0 24 24">
    <path d="M22.8 8.8 L14.2 0.8 L13.8 5.2 C6.6 5 2 9.4 1.2 15.4 C1 18.6 2 21.2 4.6 23.2 C4.2 20 5.2 17.2 7.4 15.4 C9.2 14 11.4 13.4 13.6 13.6 L13.2 17.6Z" fill="url(#gredo)" stroke="#9a9a9a" stroke-width="0.9" stroke-linejoin="round"/>
  </symbol>
  <symbol id="ic_refresh" viewBox="0 0 24 24">
    <path d="M2.6 10.6 C3 5 8.6 1.4 14.4 2.6 C16 3 17.6 3.8 18.8 5 L21.6 1.8 L21.8 11.4 L12.6 11 L15.6 8 C13.6 6.4 10.4 6.6 8.6 8.4 C7.8 9.2 7.4 9.8 7.2 10.8Z" fill="url(#gredo)" stroke="#8e8e8e" stroke-width="0.9" stroke-linejoin="round"/>
    <path d="M21.4 13.4 C21 19 15.4 22.6 9.6 21.4 C8 21 6.4 20.2 5.2 19 L2.4 22.2 L2.2 12.6 L11.4 13 L8.4 16 C10.4 17.6 13.6 17.4 15.4 15.6 C16.2 14.8 16.6 14.2 16.8 13.2Z" fill="url(#gredo)" stroke="#8e8e8e" stroke-width="0.9" stroke-linejoin="round"/>
  </symbol>
  <symbol id="ic_whats" viewBox="0 0 24 24">
    <path d="M0.8 0.6 L14.8 10.4 L10.2 12 L15 21.6 L11.6 23.4 L7 13.8 L2.2 18Z" fill="#7c7e79" stroke="#5c5e5a" stroke-width="0.9" stroke-linejoin="round"/>
    <path d="M12.8 6 C12.8 2.8 15.2 1.6 17.6 1.6 C20.4 1.6 22.2 3.2 22.2 5.6 C22.2 7.6 21.2 8.6 19.6 9.8 C18 11 17.8 11.8 17.8 14.6" fill="none" stroke="#20447c" stroke-width="3.3"/>
    <path d="M12.8 6 C12.8 2.8 15.2 1.6 17.6 1.6 C20.4 1.6 22.2 3.2 22.2 5.6 C22.2 7.6 21.2 8.6 19.6 9.8 C18 11 17.8 11.8 17.8 14.6" fill="none" stroke="#5a8fd6" stroke-width="1.6"/>
    <circle cx="17.8" cy="19.6" r="1.9" fill="#5a8fd6" stroke="#20447c" stroke-width="0.9"/>
  </symbol>

  <symbol id="sm_wall" viewBox="0 0 24 24">
    <path d="M1.2 7.4 C2 3.6 4.8 1.2 9 1.2 C11.4 1.2 13.2 2.4 13.8 4.4 C16 3 19.6 4 21.2 6.6 C22.6 8.8 23 11.4 23 13.6 L18.4 16 V20.6 L11.4 23.6 L7.6 22 V8.6 C7.2 7.4 5.8 7.2 5 8.2 L4.6 9.4Z" fill="url(#gsm)" stroke="#8a8a8a" stroke-width="0.8" stroke-linejoin="round"/>
    <path d="M7.6 8.6 L11.4 10 V23.4 M13.8 4.4 C12 5.4 11.4 7.4 11.4 10 M18.4 16 C18.4 12 16.6 9.6 14.6 9.6 C13.4 9.8 12.8 10.8 12.8 12.4 V19" fill="none" stroke="#858585" stroke-width="0.8"/>
    <path d="M12.8 12.4 C13 10.4 14 9.8 15 9.8 C17 10 18.4 12.4 18.4 16 L18.4 20.6 L12.8 22.8Z" fill="#a2a2a2" opacity="0.8"/>
  </symbol>
  <symbol id="sm_extend" viewBox="0 0 24 24">
    <path d="M1.2 7.6 L12.6 1.4 L14.6 2.4 V9.4 C14.6 11 15.4 11.8 16.6 12.4 L23.2 15.4 V17.2 L14 23.6 L6.6 20.2 C3 18.4 1.2 15.6 1.2 12Z" fill="url(#gsm)" stroke="#8a8a8a" stroke-width="0.8" stroke-linejoin="round"/>
    <path d="M1.2 7.6 L3.2 8.6 L14.6 2.4 M3.2 8.6 V12.6 C3.2 15.4 4.6 17.4 7.4 18.6 L14 21.6 L23.2 15.4 M14 21.6 V23.6 M7 6.6 V13 C7 15 8 16.4 10 17.2 L18 13 M5.4 17.6 L16.6 12.4" fill="none" stroke="#858585" stroke-width="0.7"/>
    <path d="M3.2 8.6 V12.6 C3.2 15.4 4.6 17.4 7.4 18.6 L14 21.6 V23.4 L6.6 20.2 C3 18.4 1.2 15.6 1.2 12 V7.6Z" fill="#9a9a9a"/>
  </symbol>
  <symbol id="sm_flange" viewBox="0 0 24 24">
    <path d="M1 14.6 L13.8 7 L23.4 12.4 V14.4 L13.2 22.4 L1 16.6Z" fill="url(#gsm)" stroke="#8a8a8a" stroke-width="0.8" stroke-linejoin="round"/>
    <path d="M1 14.6 L13.2 20.4 L23.4 12.4 M13.2 20.4 V22.4 M8 10.6 L18.6 16.2" fill="none" stroke="#858585" stroke-width="0.7"/>
    <path d="M15.4 1.4 L18.4 4 L20 2.6 L22.6 5.4 L21.2 6.6 L22 9 L16.6 7.6 L17.6 5 L15 2.4Z" fill="#9a9a9a" stroke="#8a8a8a" stroke-width="0.6"/>
  </symbol>
  <symbol id="sm_fold" viewBox="0 0 24 24">
    <path d="M2 7.4 L12.4 1.4 L14.4 2.4 V10.6 L23 15 V17 L14.6 23.4 L4 18.6 L2 16Z" fill="url(#gsm)" stroke="#8a8a8a" stroke-width="0.8" stroke-linejoin="round"/>
    <path d="M2 7.4 L4 8.4 L14.4 2.4 M4 8.4 V16.4 L14.6 21.4 L23 15 M14.6 21.4 V23.4 M7.6 6.4 V14" fill="none" stroke="#858585" stroke-width="0.7"/>
    <path d="M2.4 17.6 L23.4 6.6" stroke="#8c8c8c" stroke-width="2.4" stroke-linecap="round"/>
    <path d="M2.4 17.2 L23.4 6.2" stroke="#b8b8b8" stroke-width="0.8"/>
  </symbol>
  <symbol id="sm_unfold" viewBox="0 0 24 24">
    <path d="M1.4 7 L9.6 1.6 L14.4 4 L19 1.6 L22.4 3.4 V8.6 L18.8 10.6 V12.4 L23.2 14.6 V18.2 L14.8 23.4 L1.4 17 V13.4 L5 11.4 L1.4 9.8Z" fill="url(#gsm)" stroke="#8a8a8a" stroke-width="0.8" stroke-linejoin="round"/>
    <path d="M1.4 7 L10.6 11.4 L18.8 6.4 M10.6 11.4 V14 M1.4 13.4 L14.8 19.8 L23.2 14.6 M14.8 19.8 V23.4 M10.6 5 V10 L14.4 8.4 V4" fill="none" stroke="#858585" stroke-width="0.7"/>
    <path d="M1.4 9.8 L10.6 14 L18.8 10.6 V8.8 L10.6 12.6 L1.4 8Z" fill="#8f8f8f"/>
  </symbol>
  <symbol id="sm_unfold2" viewBox="0 0 24 24">
    <path d="M1.4 7 L9.6 1.6 L14.4 4 L19 1.6 L22.4 3.4 L19.6 5.6 L22.8 7.6 L19 9 L23 11.2 L19.8 12.8 L23.2 14.6 V18.2 L14.8 23.4 L1.4 17 V13.4 L5 11.4 L1.4 9.8Z" fill="url(#gsm)" stroke="#8a8a8a" stroke-width="0.8" stroke-linejoin="round"/>
    <path d="M1.4 7 L10.6 11.4 L16 8 M10.6 11.4 V14 M1.4 13.4 L14.8 19.8 L23.2 14.6 M14.8 19.8 V23.4 M10.6 5 V10 L14.4 8.4 V4" fill="none" stroke="#858585" stroke-width="0.7"/>
    <path d="M18 6 L23.6 5 V10.4 L19.6 10.2Z" fill="#fdfdfd"/>
    <path d="M1.4 9.8 L10.6 14 L17 11 V9.4 L10.6 12.6 L1.4 8Z" fill="#8f8f8f"/>
  </symbol>
  <symbol id="sm_relief" viewBox="0 0 24 24">
    <path d="M12 1.2 L20.6 5 C22.6 6.4 23.6 8.4 23.6 11 V18.2 L15.6 23 L13.6 22 V15.6 L10.4 15.6 V22 L8.4 23 L0.6 18.2 V11 C0.6 8.4 1.6 6.4 3.6 5Z" fill="url(#gsm)" stroke="#8a8a8a" stroke-width="0.8" stroke-linejoin="round"/>
    <path d="M7.4 17.4 C5.6 13.4 7.8 9 12 9 C16.2 9 18.4 13.4 16.6 17.4 L13.6 15.6 L14.6 12.4 H9.4 L10.4 15.6Z" fill="#fafafa" stroke="#858585" stroke-width="0.7" stroke-linejoin="round"/>
    <path d="M3.6 5 C7 7.6 9.4 8.6 12 9 C14.6 8.6 17 7.6 20.6 5 M0.6 11 L7 13.4 M23.6 11 L17 13.4 M8.4 23 V18 M15.6 23 V18" fill="none" stroke="#858585" stroke-width="0.7"/>
  </symbol>
  <symbol id="sm_junction" viewBox="0 0 24 24">
    <path d="M12 1 L22 6.4 V17.4 L12 23 L2 17.4 V6.4Z" fill="url(#gsm)" stroke="#8a8a8a" stroke-width="0.8" stroke-linejoin="round"/>
    <path d="M12 1 L22 6.4 L17 9.4 H7 L2 6.4Z" fill="#bcbcbc"/>
    <path d="M7 9.4 H17 V16.4 L12 20 L7 16.4Z" fill="#b4b4b4" stroke="#858585" stroke-width="0.6"/>
    <circle cx="12" cy="13.4" r="4" fill="#c8c8c8" stroke="#7e7e7e" stroke-width="0.8"/>
    <path d="M12 13.4 V9.6 M12 13.4 L8.6 15.6 M12 13.4 L15.4 15.6" stroke="#7e7e7e" stroke-width="0.8"/>
    <circle cx="12" cy="13.2" r="1.3" fill="#8c8c8c"/>
  </symbol>
  <symbol id="sm_bend" viewBox="0 0 24 24">
    <path d="M12 1 L22 6.4 V17.4 L12 23 L2 17.4 V6.4Z" fill="url(#gsm)" stroke="#8a8a8a" stroke-width="0.8" stroke-linejoin="round"/>
    <path d="M12 1 L22 6.4 L14 10.4 H10 L2 6.4Z" fill="#c2c2c2"/>
    <path d="M2 6.4 L10 10.4 V21.8 L2 17.4Z" fill="#9c9c9c"/>
    <path d="M10 10.4 C10 8.8 14 8.8 14 10.4 V21 C14 22.6 10 22.6 10 21Z" fill="#cfcfcf" stroke="#858585" stroke-width="0.7"/>
    <ellipse cx="12" cy="21.6" rx="2" ry="1.1" fill="#fafafa" stroke="#858585" stroke-width="0.6"/>
    <path d="M12 11.4 V19.4" stroke="#8a8a8a" stroke-width="0.8" stroke-dasharray="1.6 1.2"/>
  </symbol>
  <symbol id="sm_sketch" viewBox="0 0 24 24">
    <path d="M2 5.6 L4.6 4 L12 8 L19.4 4 L22 5.6 V16.6 L12 22.4 L2 16.6Z" fill="url(#gsm)" stroke="#8a8a8a" stroke-width="0.8" stroke-linejoin="round"/>
    <path d="M2 5.6 L10 10 V21 L2 16.6Z" fill="#8f8f8f"/>
    <path d="M22 5.6 L14 10 V21 L22 16.6Z" fill="#b0b0b0"/>
    <path d="M10 10 C10 8.4 14 8.4 14 10 V21.2 L12 22.4 L10 21.2Z" fill="#c9c9c9"/>
    <path d="M12 11 V20.6" stroke="#8a8a8a" stroke-width="0.8" stroke-dasharray="1.8 1.4"/>
    <path d="M4.6 4 V14 M7 5.4 V15.4 M19.4 4 V14 M17 5.4 V15.4" stroke="#858585" stroke-width="0.5" opacity="0.6"/>
  </symbol>
  <symbol id="sm_form" viewBox="0 0 24 24">
    <path d="M12 1.4 L17.6 1 L22.6 4 C24 8 24 12 22.2 16 L13.6 23 L12.4 22.2 V8.6Z" fill="#9a9a9a" stroke="#8a8a8a" stroke-width="0.7" stroke-linejoin="round"/>
    <path d="M13.4 3 L22.4 6.4 M13.4 5.4 L23.2 9 M13.4 8 L23.4 11.6 M13.4 10.6 L23 14.2 M13.4 13.2 L22 16.6 M13.4 15.8 L20.4 18.4" stroke="#7a7a7a" stroke-width="0.9"/>
    <path d="M3 1.8 L12.6 5.6 V22.6 L3 17.4Z" fill="#f2f2f2" stroke="#9a9a9a" stroke-width="0.8" stroke-linejoin="round"/>
    <path d="M0.8 17.2 L3 16.2 V17.4 L12.6 22.6 L14.2 21.8 L13.2 23.6 L11.6 24 L0.8 18.6Z" fill="#b4b4b4" stroke="#8a8a8a" stroke-width="0.6"/>
    <circle cx="9" cy="10.8" r="3" fill="#fff" stroke="#8a8a8a" stroke-width="0.9"/>
    <path d="M8.2 13.6 C7 15.6 7.6 18 9.6 19" fill="none" stroke="#8a8a8a" stroke-width="0.9"/>
    <circle cx="7.2" cy="13.8" r="2.6" fill="none" stroke="#a0a0a0" stroke-width="0.8"/>
  </symbol>
  <symbol id="sm_base" viewBox="0 0 24 24">
    <path d="M0.8 12.6 L11.8 4.4 L23.2 10.6 V12.8 L11.6 20.6 L0.8 14.8Z" fill="url(#gsm)" stroke="#8a8a8a" stroke-width="0.8" stroke-linejoin="round"/>
    <path d="M0.8 12.6 L11.6 18.4 L23.2 10.6 M11.6 18.4 V20.6" fill="none" stroke="#858585" stroke-width="0.7"/>
    <ellipse cx="12" cy="10.6" rx="5" ry="3.4" fill="#b4b4b4" stroke="#8a8a8a" stroke-width="0.8"/>
    <ellipse cx="12" cy="11.8" rx="2.6" ry="1.6" fill="#e0e0e0" stroke="#9a9a9a" stroke-width="0.5"/>
  </symbol>
  <symbol id="sm_flat" viewBox="0 0 24 24">
    <path d="M0.8 12.6 L11.8 4.4 L23.2 10.6 V12.8 L11.6 20.6 L0.8 14.8Z" fill="url(#gsm)" stroke="#8a8a8a" stroke-width="0.8" stroke-linejoin="round"/>
    <path d="M0.8 12.6 L11.6 18.4 L23.2 10.6 M11.6 18.4 V20.6" fill="none" stroke="#858585" stroke-width="0.7"/>
    <path d="M6 10.6 L11.6 6.6 L18 10 L12.4 14.2Z" fill="#bdbdbd" stroke="#858585" stroke-width="0.7"/>
    <path d="M8.6 10.4 L13.6 13 M12 8 V11 L16.6 13 M6.4 13 L12 16 L17.6 12.4 V14" fill="none" stroke="#7e7e7e" stroke-width="0.8"/>
    <path d="M13 13.6 L18 11 V13.4 L14 15.6Z" fill="#8f8f8f"/>
  </symbol>
  <symbol id="sm_conv" viewBox="0 0 24 24">
    <path d="M1 6.4 L9.6 1.4 L13 3.4 V8.6 L10.6 10 V11.6 L13.4 13.2 V11.6 L20.4 7.6 L23.6 9.6 V15.8 L14.4 22.6 C12.6 23.6 10.6 23.6 8.8 22.6 C4 20.4 1 16.4 1 11.2Z" fill="#4a7fc4" stroke="#16335f" stroke-width="0.9" stroke-linejoin="round"/>
    <path d="M1 6.4 L4.2 8.2 L13 3.4 M4.2 8.2 V13.4 M13.4 13.2 L16.6 15 L23.6 9.6 M16.6 15 V21 M2 11 L10.6 10 M3 14.6 L10.6 11.6 M4.2 13.4 C5.4 17.4 8 19.6 11.4 20.4 L13.4 17.6 M13.4 13.2 V17.6 L16.6 19.4 M11.4 20.4 V23.2 M7.6 18.6 L6.4 21" fill="none" stroke="#16335f" stroke-width="0.8" stroke-linejoin="round"/>
    <path d="M4.6 8.8 L12.6 4.4 V8.2 L4.6 12.6Z" fill="#6f9fdc"/>
    <path d="M17 15.4 L23.2 10.6 V15.4 L17 20.2Z" fill="#6f9fdc"/>
  </symbol>
</defs>
</svg>
<svg width="0" height="0" style="position:absolute">
<defs>
  <symbol id="p_part" viewBox="0 0 16 16">
    <path d="M2.2 5.6 L7.4 1.4 L11.4 3 V6.6 L14 7.8 V11.6 L9.4 15 L2.2 12.4Z" stroke-width="0.8" stroke-linejoin="round"/>
    <path d="M2.2 5.6 L6.2 7 L11.4 3 M6.2 7 V10 L9.4 11.2 L14 7.8 M9.4 11.2 V15 M6.2 10 L2.2 8.8" fill="none" stroke-width="0.7" stroke-linejoin="round"/>
  </symbol>
  <symbol id="i_part" viewBox="0 0 16 16">
    <use href="#p_part" fill="#efd514" stroke="#7a6800"/>
    <path d="M2.8 5.8 L6.2 6.6 L10.4 3.2 L7.4 2Z M6.8 9.8 L9.4 10.6 L13 8 L11 7.2Z" fill="#fdf28a"/>
  </symbol>
  <symbol id="i_body" viewBox="0 0 16 16">
    <use href="#p_part" fill="#4a7cc0" stroke="#1d3d75"/>
    <path d="M2.8 5.8 L6.2 6.6 L10.4 3.2 L7.4 2Z M6.8 9.8 L9.4 10.6 L13 8 L11 7.2Z" fill="#7ea6dc"/>
  </symbol>
  <symbol id="i_link" viewBox="0 0 16 16">
    <g transform="translate(1.6,-0.6) scale(0.9)"><use href="#p_part" fill="#efd514" stroke="#7a6800"/><path d="M2.8 5.8 L6.2 6.6 L10.4 3.2 L7.4 2Z M6.8 9.8 L9.4 10.6 L13 8 L11 7.2Z" fill="#fdf28a"/></g>
    <path d="M1 13.4 C1 11.4 4 11.4 5 12.6 C6.4 11.4 9.4 11.6 9.4 13.4 C9.4 15 6.4 15.4 5 14 C3.6 15.4 1 15 1 13.4Z" fill="#f4f4f0" stroke="#9aa08a" stroke-width="0.8"/>
    <path d="M9 12.6 C10.4 11.2 13 11.6 13 13 C13 14.4 11 14.8 9.6 14" fill="#f4f4f0" stroke="#9aa08a" stroke-width="0.8"/>
  </symbol>
  <symbol id="i_folder" viewBox="0 0 16 16">
    <path d="M0.6 1.8 H6.4 L7.4 3 H15.4 V14.6 H0.6Z" fill="#204a87" stroke="#17386a" stroke-width="0.6"/>
    <path d="M0.8 5 H6 L7.2 4 H15.2 V14.4 H0.8Z" fill="#5b8ccd" stroke="#204a87" stroke-width="0.6"/>
    <path d="M4.8 5.4 H11.2 V9 C11.2 11 4.8 11 4.8 9Z" fill="#3f6fb3" stroke="#1d3d75" stroke-width="0.6"/>
    <path d="M4.4 10 C5 13.6 11 13.6 11.6 10 L10 10.4 C9.4 12.2 6.6 12.2 6 10.4Z" fill="#f1d816" stroke="#8a7400" stroke-width="0.5"/>
  </symbol>
  <symbol id="i_gjoint" viewBox="0 0 16 16">
    <path d="M2.4 5.4 L6 3.4 C6.4 1 9.6 0.6 10.6 2.8 L11 4.4 C13.4 5 14.6 6.6 14.4 9 C14 11.4 12.4 12.4 10.6 12.6 L8.4 14.6 L2.4 12.6Z" fill="#a4a4a4" stroke="#9a9a9a" stroke-width="0.6" stroke-linejoin="round"/>
    <path d="M2.4 5.4 L4.4 6 V13.2 M6.4 4 V13.8 M8.4 5.4 V14.6 M4.4 6 L8.4 5.4" fill="none" stroke="#c6c6c6" stroke-width="0.9"/>
    <rect x="7.6" y="4" width="2" height="2" fill="#e6e6e6"/>
  </symbol>
  <symbol id="i_origin" viewBox="0 0 16 16">
    <path d="M7.6 1.2 V8.6 M7.6 8.6 H14.6" fill="none" stroke="#aaaaaa" stroke-width="2.3" stroke-linecap="round"/>
    <path d="M7.6 8.6 L2.6 13.6" fill="none" stroke="#808080" stroke-width="2.1" stroke-linecap="round"/>
  </symbol>
  <symbol id="i_base" viewBox="0 0 16 16">
    <path d="M0.8 3.8 L5.8 1 L8 2.2 V6.6 L9.6 7.4 L13.4 5.2 L15.6 6.4 V10 L9 15 C7 15.8 5 15 3.4 13.6 C1.6 12 0.8 10 0.8 7.6Z" fill="#a9a9a9" stroke="#989898" stroke-width="0.6" stroke-linejoin="round"/>
    <path d="M0.8 3.8 L3 5 L8 2.2 M3 5 V9 C3.4 11.4 5 13 7.4 13.4 L9.6 11.4 V7.4 M9.6 11.4 L11.6 12.6 M9.6 7.6 L11.6 8.8 L15.6 6.4 M11.6 8.8 V13" fill="none" stroke="#868686" stroke-width="0.6"/>
    <path d="M3.4 5.2 L7.6 2.8 V6.4 L3.4 8.8Z M12 9 L15.2 7 V9.8 L12 12.2Z" fill="#bdbdbd"/>
  </symbol>
  <symbol id="i_bend" viewBox="0 0 16 16">
    <path d="M0.8 4 L7.4 0.8 L9.4 1.8 V6 C9.4 7 10 7.6 11 8 L15.6 10.2 V11.6 L9.6 15.6 L4.4 13.4 C2 12.2 0.8 10.4 0.8 8Z" fill="#adadad" stroke="#989898" stroke-width="0.6" stroke-linejoin="round"/>
    <path d="M0.8 4 L2.6 5 L9.4 1.8 M2.6 5 V8.4 C2.6 10.2 3.6 11.4 5.4 12.2 L9.6 14 L15.6 10.2 M4.4 4.2 V8 C4.6 9.6 5.6 10.6 7 11.2 L11.4 13 M6.4 3.2 V7.2 C6.6 8.6 7.4 9.4 8.8 10 L13.4 11.8" fill="none" stroke="#8a8a8a" stroke-width="0.6"/>
    <path d="M0.8 4 L2.6 5 V8.4 C2.6 10.2 3.6 11.4 5.4 12.2 L9.6 14 V15.6 L4.4 13.4 C2 12.2 0.8 10.4 0.8 8Z" fill="#9c9c9c"/>
  </symbol>
  <symbol id="i_bend4" viewBox="0 0 16 16">
    <path d="M0.8 4 L7.4 0.8 L9.4 1.8 V6 C9.4 7 10 7.6 11 8 L15.6 10.2 V11.6 L9.6 15.6 L4.4 13.4 C2 12.2 0.8 10.4 0.8 8Z" fill="#5fb330" stroke="#2f6a12" stroke-width="0.6" stroke-linejoin="round"/>
    <path d="M0.8 4 L2.6 5 L9.4 1.8 M2.6 5 V8.4 C2.6 10.2 3.6 11.4 5.4 12.2 M4.4 4.2 V8 C4.6 9.6 5.6 10.6 7 11.2 M6.4 3.2 V7.2" fill="none" stroke="#2f6a12" stroke-width="0.6"/>
    <path d="M0.8 4 L2.6 5 V8.4 C2.6 10.2 3.6 11.4 5.4 12.2 L6 13.8 L4.4 13.4 C2 12.2 0.8 10.4 0.8 8Z" fill="#3f8a1c"/>
    <path d="M4.6 12.4 L6.6 11 L7.6 13.4 L6 14Z" fill="#3465a4"/>
    <circle cx="11" cy="11" r="4.8" fill="#55c21e" stroke="#3f9a10" stroke-width="0.5"/>
    <path d="M9.6 8.2 H12.4 V10.8 H14 L11 14.2 L8 10.8 H9.6Z" fill="#fff"/>
  </symbol>
  <symbol id="i_varset" viewBox="0 0 16 16">
    <path d="M7 1.6 C4.8 1.5 4.4 2.6 4.4 4 V6 C4.4 7.2 3.8 7.9 2.2 8 C3.8 8.1 4.4 8.8 4.4 10 V12 C4.4 13.4 4.8 14.5 7 14.4" fill="none" stroke="#2e3436" stroke-width="2" stroke-linejoin="round"/>
    <path d="M7 1.6 C4.8 1.5 4.4 2.6 4.4 4 V6 C4.4 7.2 3.8 7.9 2.2 8 C3.8 8.1 4.4 8.8 4.4 10 V12 C4.4 13.4 4.8 14.5 7 14.4" fill="none" stroke="#c8cac6" stroke-width="0.5"/>
    <path d="M9 1.6 C11.2 1.5 11.6 2.6 11.6 4 V6 C11.6 7.2 12.2 7.9 13.8 8 C12.2 8.1 11.6 8.8 11.6 10 V12 C11.6 13.4 11.2 14.5 9 14.4" fill="none" stroke="#2e3436" stroke-width="2" stroke-linejoin="round"/>
    <path d="M9 1.6 C11.2 1.5 11.6 2.6 11.6 4 V6 C11.6 7.2 12.2 7.9 13.8 8 C12.2 8.1 11.6 8.8 11.6 10 V12 C11.6 13.4 11.2 14.5 9 14.4" fill="none" stroke="#c8cac6" stroke-width="0.5"/>
  </symbol>
</defs>
</svg>
<svg class="abs" id="view3d" style="left:409px;top:210px" width="970" height="636" viewBox="409 210 970 636">
  <defs>
    <linearGradient id="bg" x1="0" y1="0" x2="0" y2="1"><stop offset="0" stop-color="#333365"/><stop offset="1" stop-color="#9797aa"/></linearGradient>
    <linearGradient id="bev1" gradientUnits="userSpaceOnUse" x1="600" y1="470" x2="597.4" y2="478"><stop offset="0" stop-color="#c4b6b9"/><stop offset="0.45" stop-color="#ddd0d5"/><stop offset="1" stop-color="#bcaeb0"/></linearGradient>
  </defs>
  <rect x="409" y="210" width="970" height="636" fill="url(#bg)"/>
  <g stroke="#141414" stroke-width="1.7" stroke-linejoin="round">
    <!-- left leg -->
    <polygon points="493.8,509.5 600,545 496,648 493.8,647" fill="#75665e" stroke-width="1.2"/>
    <path d="M495.6,510 V647" stroke-width="0.8" fill="none"/>
    <!-- top face -->
    <polygon points="723,284 1298,474 1073,698 1070,698 1070,626 498.5,436.5 619,317.4 672,334" fill="#938280"/>
    <!-- green box -->
    <polygon points="844.4,330 1070.2,406 1025.5,451.9 799,377" fill="#1e9b50" stroke="none"/>
    <polygon points="1070.2,406 1070.2,466.7 1025.5,451.9" fill="#198643" stroke="none"/>
    <path d="M799,377 L844.4,330 L1070.2,406 V466.4 M1070.2,406 L1025.5,451.9" fill="none" stroke-width="1.6"/>
    <!-- right bevel -->
    <polygon points="1298,474 1302,480 1078,705 1072,698" fill="#b3a3a3"/>
    <!-- right dark face -->
    <polygon points="1302,480 1302,616 1076.5,840.5 1073.8,839 1073.8,703 1078,705" fill="#73635c"/>
    <path d="M1077.3,706 V839" stroke-width="1" fill="none"/>
    <!-- front face -->
    <polygon points="496,445.5 1069,634 1069,698.5 495.6,509.5" fill="#ab9c9b" stroke="none"/>
    <path d="M495.6,509.5 L1069,698.5" fill="none" stroke="#2a2220" stroke-width="1.1"/>
    <path d="M495.8,445 V509.5" fill="none" stroke-width="1.6"/>
    <!-- bevel -->
    <polygon points="498.5,436.5 1070.5,626 1069,634 496,445.5" fill="url(#bev1)"/>
    <!-- edges -->
    <path d="M619,317.4 L1192,507 L1071,626" fill="none" stroke-width="2.1"/>
    <path d="M1069.8,626 V698.5" fill="none" stroke-width="2.4"/>
  </g>

  <!-- pcb -->
  <g id="pcb" stroke-linejoin="round">
    <path d="M711,455 L716,449.5 L764,400.5 Q769,396 778,396 L786,397.4 L856.9,419.4 L856.3,431 L905.5,449.8 L924.1,441.8 L987.9,462.8 Q996.4,466 994.6,471 L941.6,528.4 Q936,533.6 927,534 L919,534 L720,465.8 Q711.6,462 711,455Z" fill="#e20000" stroke="#980000" stroke-width="1.5"/>
    <path d="M716,446 L764,397 Q769,392.6 778,392.6 L786,394 L856.9,416 Q857.6,422 856.3,428 L905.5,446.5 L924.1,438.4 L987.9,459.5 Q996.6,462.4 994.4,468.6 L941,525 Q936,530 927,530.4 L919.6,530.6 L721,462.5 Q710.4,458.6 711.4,452 Q712,449.6 716,446Z" fill="#fe0000" stroke="#a80000" stroke-width="1.5"/>
    <!-- slots -->
    <path d="M778.6,397.2 Q784.4,397.6 782.6,401.6 L758.6,426 Q753.4,428.4 751,425.2 Q749.4,422.4 753,418.8 L774,398.8 Q776,397.2 778.6,397.2Z" fill="#ff1212" stroke="#a80000" stroke-width="1.3"/>
    <path d="M777.4,400 Q780.4,400.4 779.4,402.4 L757.6,424.2 Q755,425.4 753.8,424 Q753.2,422.6 755,420.8 L775.4,401 Q776.4,400 777.4,400Z" fill="#b9a8a7" stroke="#c00000" stroke-width="0.7"/>
    <path d="M980,462.6 Q985.8,463 984,467 L960.2,491.4 Q955,493.8 952.6,490.6 Q951,487.8 954.6,484.2 L975.4,464.2 Q977.4,462.6 980,462.6Z" fill="#ff1212" stroke="#a80000" stroke-width="1.3"/>
    <path d="M978.8,465.4 Q981.8,465.8 980.8,467.8 L959.2,489.6 Q956.6,490.8 955.4,489.4 Q954.8,488 956.6,486.2 L976.8,466.4 Q977.8,465.4 978.8,465.4Z" fill="#b9a8a7" stroke="#c00000" stroke-width="0.7"/>
    <!-- holes -->
    <ellipse cx="725.8" cy="452.2" rx="4.6" ry="3.1" fill="#ff0a0a" stroke="#a80000" stroke-width="1.3"/>
    <ellipse cx="913.3" cy="457.8" rx="4.6" ry="3.1" fill="#ff0a0a" stroke="#a80000" stroke-width="1.3"/>
    <ellipse cx="926" cy="518.4" rx="4.6" ry="3.1" fill="#ff0a0a" stroke="#a80000" stroke-width="1.3"/>
    <path d="M886,512.4 L889.6,509.6 M910,521 L913.6,518" stroke="#c40000" stroke-width="1.2"/>
    <g stroke="none"><rect x="785.4" y="402.0" width="6" height="4" rx="1" fill="#171717" transform="rotate(18 788.4 404)"/><rect x="807.3" y="402.9" width="9" height="5" rx="1" fill="#171717" transform="rotate(18 811.8 405.4)"/><rect x="773.3" y="413.6" width="6" height="4" rx="1" fill="#171717" transform="rotate(18 776.3 415.6)"/><rect x="776.7" y="439.7" width="10" height="4.6" rx="1" fill="#171717" transform="rotate(18 781.7 442)"/><rect x="846.7" y="431.1" width="12" height="5" rx="1" fill="#171717" transform="rotate(18 852.7 433.6)"/><rect x="844.1" y="432.9" width="3" height="3" rx="1" fill="#171717" transform="rotate(18 845.6 434.4)"/><rect x="895.2" y="451.3" width="5" height="4.6" rx="1" fill="#171717" transform="rotate(18 897.7 453.6)"/><rect x="888.6" y="456.0" width="4" height="3.6" rx="1" fill="#171717" transform="rotate(18 890.6 457.8)"/><rect x="885.2" y="459.7" width="3.6" height="3.4" rx="1" fill="#171717" transform="rotate(18 887 461.4)"/><rect x="867.5" y="458.0" width="5" height="3.6" rx="1" fill="#171717" transform="rotate(18 870 459.8)"/><rect x="904.0" y="468.1" width="14" height="4.4" rx="1" fill="#171717" transform="rotate(18 911 470.3)"/><rect x="928.0" y="465.7" width="14" height="4.6" rx="1" fill="#171717" transform="rotate(18 935 468)"/><rect x="926.1" y="484.4" width="11" height="8" rx="1" fill="#171717" transform="rotate(18 931.6 488.4)"/><rect x="854.5" y="494.9" width="3.4" height="3.4" rx="1" fill="#171717" transform="rotate(18 856.2 496.6)"/><rect x="926.8" y="508.5" width="14" height="4.2" rx="1" fill="#171717" transform="rotate(18 933.8 510.6)"/><rect x="859.4" y="493.6" width="4" height="4" rx="1" fill="#171717" transform="rotate(18 861.4 495.6)"/><rect x="937.1" y="475.8" width="15" height="6" rx="1" fill="#171717" transform="rotate(-38 944.6 478.8)"/><rect x="860.4" y="494.9" width="32" height="7.4" rx="1" fill="#171717" transform="rotate(22 876.4 498.6)"/><rect x="823.0" y="456.5" width="22" height="9" rx="1" fill="#171717" transform="rotate(-30 834 461)"/><rect x="830.0" y="460.9" width="16" height="5" rx="1" fill="#171717" transform="rotate(20 838 463.4)"/><polygon points="772.4,428 781,421.6 796.6,427.6 788,437.6 775.6,433.4" fill="#171717"/><polygon points="781.6,424.4 786,423 794.4,427.4 790,431.6 782,428.6" fill="#2e2e2e"/><ellipse cx="749.6" cy="455" rx="1.9" ry="1.3" fill="#c60000"/><ellipse cx="758.4" cy="457.8" rx="1.9" ry="1.3" fill="#c60000"/><ellipse cx="767.4" cy="460.8" rx="1.9" ry="1.3" fill="#c60000"/><ellipse cx="776.6" cy="463.8" rx="1.9" ry="1.3" fill="#c60000"/><ellipse cx="770.8" cy="448.6" rx="1.9" ry="1.3" fill="#c60000"/><ellipse cx="778" cy="451" rx="1.9" ry="1.3" fill="#c60000"/><ellipse cx="784.6" cy="453.2" rx="1.9" ry="1.3" fill="#c60000"/><ellipse cx="822" cy="415.4" rx="1.9" ry="1.3" fill="#c60000"/><ellipse cx="829" cy="417.8" rx="1.9" ry="1.3" fill="#c60000"/><ellipse cx="836" cy="419.6" rx="1.9" ry="1.3" fill="#c60000"/><ellipse cx="811" cy="426.6" rx="1.9" ry="1.3" fill="#c60000"/><ellipse cx="818" cy="429" rx="1.9" ry="1.3" fill="#c60000"/><ellipse cx="824.6" cy="431.2" rx="1.9" ry="1.3" fill="#c60000"/><ellipse cx="802.4" cy="434.2" rx="1.9" ry="1.3" fill="#c60000"/><ellipse cx="809.6" cy="436.4" rx="1.9" ry="1.3" fill="#c60000"/><ellipse cx="816.8" cy="438.8" rx="1.9" ry="1.3" fill="#c60000"/><ellipse cx="795.6" cy="441.6" rx="1.9" ry="1.3" fill="#c60000"/><ellipse cx="802.6" cy="444.4" rx="1.9" ry="1.3" fill="#c60000"/><ellipse cx="806" cy="438.6" rx="1.9" ry="1.3" fill="#c60000"/><ellipse cx="799" cy="438" rx="1.9" ry="1.3" fill="#c60000"/><ellipse cx="783" cy="408.4" rx="1.9" ry="1.3" fill="#c60000"/><ellipse cx="780" cy="412" rx="1.9" ry="1.3" fill="#c60000"/><ellipse cx="934.6" cy="452.6" rx="1.9" ry="1.3" fill="#c60000"/><ellipse cx="941.6" cy="454.8" rx="1.9" ry="1.3" fill="#c60000"/><ellipse cx="948.2" cy="457" rx="1.9" ry="1.3" fill="#c60000"/><ellipse cx="954.6" cy="459.2" rx="1.9" ry="1.3" fill="#c60000"/><ellipse cx="961.4" cy="461.6" rx="1.9" ry="1.3" fill="#c60000"/><ellipse cx="968.4" cy="463.8" rx="1.9" ry="1.3" fill="#c60000"/><ellipse cx="868.2" cy="466" rx="1.9" ry="1.3" fill="#c60000"/><ellipse cx="874.8" cy="468" rx="1.9" ry="1.3" fill="#c60000"/><ellipse cx="880.6" cy="480" rx="1.9" ry="1.3" fill="#c60000"/><ellipse cx="876.8" cy="484" rx="1.9" ry="1.3" fill="#c60000"/><ellipse cx="945.2" cy="493.4" rx="1.9" ry="1.3" fill="#c60000"/><ellipse cx="959" cy="498" rx="1.9" ry="1.3" fill="#c60000"/><ellipse cx="946" cy="510.6" rx="1.9" ry="1.3" fill="#c60000"/><ellipse cx="918" cy="512" rx="1.9" ry="1.3" fill="#c60000"/><ellipse cx="932" cy="506" rx="1.9" ry="1.3" fill="#c60000"/><ellipse cx="895.6" cy="504.6" rx="1.9" ry="1.3" fill="#c60000"/></g>
    <!-- usb -->
    <g stroke="#111" stroke-width="1.2">
      <polygon points="800,466 808,462.4 818,466.6 818,485.4 812,489.8 790,481.6 788.4,470.6 797,464" fill="#1c1c1c"/>
      <polygon points="789.4,470.4 797.6,464.8 813.6,471.2 811.4,476.6" fill="#9d9f9b"/>
      <polygon points="789.4,470.4 811.4,476.6 811.4,487.2 789.4,480.4" fill="#c6c8c3"/>
      <polygon points="811.4,476.6 813.6,471.2 817.4,469.6 817.4,484.4 811.4,487.2" fill="#8e908c"/>
    </g>
    <circle cx="807.8" cy="466.2" r="1.3" fill="#e02020"/>
  </g>

  <!-- nav cube -->
  <g id="navcube" stroke-linejoin="round">
    <g fill="#6a6a92" stroke="#2a2a48" stroke-width="0.8">
      <polygon points="1307,216.2 1318.7,229.3 1295.5,229.3"/>
      <polygon points="1307,347.4 1318.5,334.7 1295.4,334.7"/>
      <polygon points="1243.4,282 1254.5,270 1254.5,293.5"/>
      <polygon points="1372.8,282 1359.6,270 1359.6,293.5"/>
      <circle cx="1364.2" cy="224.3" r="6.6"/>
      <path d="M1288.2,223.2 L1290.6,230.2 C1280.6,233.6 1274,238.6 1268.6,246 L1271.6,248 L1257.6,251.4 L1260.6,237.2 L1263,239.6 C1269.4,231.6 1277.6,226.4 1288.2,223.2Z"/>
      <path d="M1325.8,223.2 L1323.4,230.2 C1333.4,233.6 1340,238.6 1345.4,246 L1342.4,248 L1356.4,251.4 L1353.4,237.2 L1351,239.6 C1344.6,231.6 1336.4,226.4 1325.8,223.2Z"/>
      <polygon points="1351.6,318.6 1361.4,322.6 1361,333.6 1352.4,338.6 1342.2,334 1342.4,323"/>
      <path d="M1342.4,323 L1352,327.4 L1361.4,322.6 M1352,327.4 L1352.4,338.6" fill="none"/>
    </g>
    <g fill="#6c6c94" stroke="#222240" stroke-width="1.1">
      <polygon points="1278.5,257.5 1293,241.5 1305,239.5 1333.5,250 1336.5,257 1319.5,271.5 1309,272.5 1280.5,263.5"/>
      <polygon points="1280.5,263.5 1309,272.5 1306,282 1277.5,273.5"/>
      <polygon points="1278.5,257.5 1280.5,263.5 1277.5,273.5 1270.6,277 1268,271.4 1272.4,261"/>
      <polygon points="1319.5,271.5 1336.5,257 1344,264 1326.5,279"/>
      <polygon points="1336.5,257 1333.5,250 1340.6,255 1346.2,262.4 1344,264"/>
      <polygon points="1309,272.5 1319.5,271.5 1326.5,279 1323,289 1312.5,290.5 1306,282"/>
      <polygon points="1270.6,277 1277.5,273.5 1306,282 1312.5,290.5 1312.5,319.4 1307.6,323 1277,314.8 1270.4,305 1268,297"/>
      <polygon points="1268,271.4 1270.6,277 1268,297"/>
      <polygon points="1312.5,290.5 1323,289 1322.4,319.4 1312.5,319.4"/>
      <polygon points="1312.5,319.4 1322.4,319.4 1319,324.6 1311,325.4 1307.6,323"/>
      <polygon points="1323,289 1326.5,279 1344,264 1346.2,266.2 1346.2,292.4 1337,310.8 1322.4,319.4"/>
      <polygon points="1344,264 1346.2,262.4 1346.2,266.2"/>
    </g>
    <path d="M1259.7,275.6 V317.4" stroke="#1616c8" stroke-width="1.7" fill="none"/>
    <path d="M1259.7,317.4 L1285.4,292.3" stroke="#35c455" stroke-width="1.7" fill="none" opacity="0.8"/>
    <path d="M1259.7,317.4 L1304,332" stroke="#b01030" stroke-width="1.7" fill="none"/>
    <g font-family="'Liberation Sans',sans-serif" fill="#34344f" stroke="#34344f" stroke-width="0.25" font-size="11.5">
      <text transform="matrix(0.98,0.38,-0.5,0.62,1293.4,254)">TOP</text>
      <text transform="matrix(0.9,0.3,0,1.05,1273,295.4)" font-size="11.8">FRONT</text>
      <text transform="matrix(0.56,-0.74,0,1.12,1324.4,312.6)" font-size="11">RIGHT</text>
    </g>
  </g>
  <!-- axis cross -->
  <g id="axiscross">
    <path d="M1347.5,814.5 V800" stroke="#1c1c8c" stroke-width="1.3"/>
    <path d="M1347.5,793.6 L1350,801.6 H1345Z" fill="#1c1c8c"/>
    <path d="M1347.5,814.5 L1353,809" stroke="#1f8f1f" stroke-width="1.6"/>
    <path d="M1356.4,805.6 L1354.6,811 L1351,807.4Z" fill="#1f8f1f"/>
    <path d="M1347.5,814.5 L1362,819.4" stroke="#8c1c1c" stroke-width="1.3"/>
    <path d="M1368.8,821.4 L1360.4,821.4 L1362,816.6Z" fill="#8c1c1c"/>
    <g font-family="'Liberation Sans',sans-serif" font-weight="bold" font-size="10.2" fill="#000">
      <text x="1348.4" y="792.2">Z</text><text x="1357.2" y="805">Y</text><text x="1369.2" y="821.2">X</text>
    </g>
  </g>
</svg>
<!-- MDI tabs -->
<div class="abs" style="left:409px;top:846px;width:970px;height:1px;background:#fbfbfb"></div>
<div class="abs" style="left:409px;top:847px;width:970px;height:1px;background:#b8b8b8;z-index:1"></div>
<div class="mtab un" style="left:409px;top:847px;width:97px;height:28px">
  <svg class="abs" style="left:12px;top:4px" width="15" height="17"><use href="#fclogo"/></svg>
  <svg class="abs" style="left:67px;top:8px" width="11" height="11"><use href="#xcl"/></svg>
</div>
<div class="mtab sel" style="left:505px;top:846px;width:187px;height:31px;z-index:2">
  <svg class="abs" style="left:12.5px;top:6.5px" width="14" height="17"><use href="#i_doc2"/></svg>
  <svg class="abs" style="left:157px;top:10px" width="11" height="11"><use href="#xcl"/></svg>
</div>
<div class="mtab un" style="left:691px;top:847px;width:200px;height:28px">
  <svg class="abs" style="left:12.5px;top:4.5px" width="14" height="17"><use href="#i_doc2"/></svg>
  <svg class="abs" style="left:171px;top:8px" width="11" height="11"><use href="#xcl"/></svg>
</div>
<div class="abs" style="left:684px;top:880px;width:17px;height:1px;background-image:linear-gradient(90deg,#b4b4b4 1px,transparent 1px);background-size:3px 1px"></div>
<!-- Report view -->
<svg class="dbtn" style="left:644px;top:886px"><use href="#dk1"/></svg>
<svg class="dbtn" style="left:667px;top:886px"><use href="#dk2"/></svg>
<svg class="dbtn" style="left:690px;top:886px"><use href="#dk3"/></svg>
<div class="frame" style="left:0;top:903px;width:707px;height:107px;overflow:hidden">
  <div class="mono" style="top:3px;color:#3c3c3c">15:48:56  No measure handler available for geometry of module: Measure
15:49:13  No measure handler available for geometry of module: App
16:36:24  Using V1 unfolding system
16:36:24  the angles:  0.0   1.5707963267948966   0.0   -6.283185307179586
16:36:24  the angles:  0.0   1.5707963267948966   0.0   -6.283185307179586
16:36:24  the angles:  0.0   1.5707963267948966   0.0   -6.283185307179586
16:36:24  the angles:  0.0   1.5707963267948966   0.0   -6.283185307179586</div>
  <div class="sb" style="left:691px;top:0;height:105px"><i class="u" style="top:4px"></i><i class="h" style="top:13px;height:16px"></i><i class="h" style="top:72px;height:20px"></i><i class="d" style="top:96px"></i></div>
</div>
<div class="abs" style="left:710px;top:939px;width:1px;height:18px;background-image:linear-gradient(#b4b4b4 1px,transparent 1px);background-size:1px 3px"></div>
<!-- Python console -->
<svg class="dbtn" style="left:1316px;top:886px"><use href="#dk1"/></svg>
<svg class="dbtn" style="left:1339px;top:886px"><use href="#dk2"/></svg>
<svg class="dbtn" style="left:1362px;top:886px"><use href="#dk3"/></svg>
<div class="frame" style="left:713px;top:903px;width:666px;height:107px;overflow:hidden">
  <div class="mono gr" style="top:1px;left:4px"><span class="pg">&gt;&gt;&gt; </span>#
Gui.Selection.addSelection('Unnamed','Body001','Bend004.Face41',-55.6669,-31.9968,
30)
<span class="pg">&gt;&gt;&gt; </span># Gui.Selection.clearSelection()
<span class="pg">&gt;&gt;&gt; </span>### Begin command Std_ViewHome
<span class="pg">&gt;&gt;&gt; </span># Gui.activeDocument().activeView().viewDefaultOrientation('Trimetric',0)
<span class="pg">&gt;&gt;&gt; </span># Gui.SendMsgToActiveView("ViewFit")</div>
  <div class="sb" style="left:650px;top:0;height:105px"><i class="u" style="top:4px"></i><i class="h" style="top:13px;height:53px"></i><i class="d" style="top:96px"></i></div>
</div>
<!-- status bar -->
<div class="abs" id="status" style="left:0;top:1010px;width:1381px;height:30px;background:#efefef">
  <div class="abs" style="left:1004px;top:8px;width:13px;height:12px;background:#3b64a6;border:1px solid #27457a"></div>
  <i class="dd" style="left:1071px;top:13px;border-top-color:#666;border-left-width:3px;border-right-width:3px;border-top-width:3.5px"></i>
  <svg class="abs" style="left:1099px;top:8px" width="14" height="14" viewBox="0 0 14 14"><rect x="1.2" y="1.2" width="11.6" height="11.6" rx="2" fill="none" stroke="#333" stroke-width="1.5"/><path d="M1.5 9 H12.5 M7 9 V12.5" stroke="#333" stroke-width="1.4"/></svg>
  <i class="dd" style="left:1179px;top:13px;border-top-color:#666;border-left-width:3px;border-right-width:3px;border-top-width:3.5px"></i>
  <i class="dd" style="left:1344px;top:13px;border-top-color:#666;border-left-width:3px;border-right-width:3px;border-top-width:3.5px"></i>
  <div class="abs" style="left:0;top:29px;width:1381px;height:1px;background:#3a3a3a"></div>
</div>
<div class="abs" style="left:1379px;top:0;width:1px;height:1040px;background:#adadad;z-index:5"></div>
<div class="abs" style="left:1380px;top:0;width:1px;height:1040px;background:#f1f1f1;z-index:5"></div>
<div class="abs" style="left:1379px;top:210px;width:2px;height:637px;background:#fdfdfd;z-index:6"></div>
<div class="abs" style="left:1379px;top:348px;width:2px;height:20px;background:#d2d2d2;z-index:7"></div>
<svg class="abs" style="left:1366px;top:1027px;z-index:4" width="12" height="12" viewBox="0 0 12 12"><g fill="#9c9c9c"><rect x="10" y="1" width="1" height="1"/><rect x="7" y="4" width="1" height="1"/><rect x="10" y="4" width="1" height="1"/><rect x="4" y="7" width="1" height="1"/><rect x="7" y="7" width="1" height="1"/><rect x="10" y="7" width="1" height="1"/><rect x="1" y="10" width="1" height="1"/><rect x="4" y="10" width="1" height="1"/><rect x="7" y="10" width="1" height="1"/><rect x="10" y="10" width="1" height="1"/></g></svg>
<span class="t" style="left:441.96px;top:853.84px;letter-spacing:-0.027px">Start</span>
<span class="t" style="left:537.52px;top:854.44px;letter-spacing:0.214px">MBiGL-BoxInsert : 1*</span>
<span class="t" style="left:723.12px;top:853.84px;letter-spacing:-0.16px">MyBikesGotLED-PCB : 1</span>
<span class="t" style="left:291.32px;top:886.14px;letter-spacing:0.22px">Report view</span>
<span class="t" style="left:974.12px;top:886.14px;letter-spacing:0.251px">Python console</span>
<span class="t" style="left:2.52px;top:1017.84px;letter-spacing:0.193px">Preselected: Unnamed.Body001.Bend004.Edge68 (112.00 mm, -75.00 mm, -14.61 mm)</span>
<span class="t" style="left:1022.59px;top:1017.84px;letter-spacing:0px">1</span>
<span class="t" style="left:1117.63px;top:1017.84px;letter-spacing:-0.104px">Touchpad</span>
<span class="t" style="left:1201.04px;top:1017.84px;letter-spacing:0.226px">322.75 mm x 211.62 mm</span>
</body>
</html>
